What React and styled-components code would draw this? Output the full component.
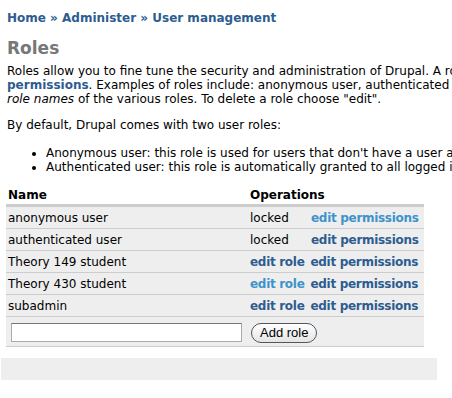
import React from 'react';
import styled, { createGlobalStyle } from 'styled-components';

const GlobalStyle = createGlobalStyle`
  body {
    margin: 0;
    background: #fff;
    font-family: 'DejaVu Sans', Verdana, sans-serif;
    font-size: 12px;
    color: #000;
  }
`;

const Page = styled.div`
  width: 452px;
  overflow: hidden;
  padding-top: 10px;
`;

const Content = styled.div`
  padding: 0 7px;
  white-space: nowrap;
`;

const Breadcrumb = styled.div`
  font-weight: bold;
  font-size: 12px;
  line-height: 16px;
  color: #2d5d90;
`;

const Link = styled.a`
  color: ${props => (props.light ? '#3d93cc' : '#2d5d90')};
  font-weight: bold;
  text-decoration: none;
`;

const OpLink = styled(Link)`
  letter-spacing: -0.3px;
`;

const Heading = styled.h1`
  margin: 12px 0 6px;
  font-size: 17px;
  line-height: 20px;
  color: #777;
`;

const Para = styled.p`
  margin: 0 0 ${props => (props.last ? '14px' : '12px')};
  line-height: 14px;
`;

const List = styled.ul`
  margin: 0 0 11px;
  padding-left: 39px;
  line-height: 14px;
  list-style: disc;
`;

const Table = styled.table`
  border-collapse: collapse;
  table-layout: fixed;
  width: 418px;
  margin-left: 6px;
  margin-top: 14px;
`;

const HeadCell = styled.th`
  width: ${props => props.w}px;
  text-align: left;
  font-weight: bold;
  padding: 0 ${props => (props.ops ? '3px' : '2px')} 2px;
  height: 13px;
  border-bottom: 3px solid #ccc;
`;

const Row = styled.tr`
  background: #eee;
  border-bottom: 1px solid #ccc;
`;

const Cell = styled.td`
  padding: 0 ${props => (props.ops ? '3px' : '2px')};
  height: ${props => (props.tall ? '29px' : '21px')};
  white-space: nowrap;
  overflow: hidden;
`;

const Ops = styled.span`
  display: inline-flex;
  gap: 6px;
`;

const Locked = styled.span`
  width: 55px;
`;

const Field = styled.input`
  width: 225px;
  height: 15px;
  margin: 2px 0 0 3px;
  border: 1px solid #aaa;
  border-top-color: #777;
  padding: 1px 2px;
  font-family: inherit;
  display: block;
`;

const Button = styled.button`
  font-family: 'Liberation Sans', Arial, sans-serif;
  font-size: 13px;
  height: 20px;
  padding: 0 8px;
  margin: 2px 0 0 1px;
  border: 1px solid #555;
  border-radius: 10px;
  background: linear-gradient(#fff, #e4e4e4);
  color: #000;
  display: block;
`;

const Footer = styled.div`
  margin: 11px 15px 0 1px;
  height: 22px;
  background: #eee;
`;

const roles = [
  { name: 'anonymous user', locked: true, permLight: true },
  { name: 'authenticated user', locked: true },
  { name: 'Theory 149 student' },
  { name: 'Theory 430 student', roleLight: true },
  { name: 'subadmin' }
];

const App = () => (
  <Page>
    <GlobalStyle />
    <Content>
      <Breadcrumb>
        <Link href="#">Home</Link> » <Link href="#">Administer</Link> » <Link href="#">User management</Link>
      </Breadcrumb>
      <Heading>Roles</Heading>
      <Para>
        Roles allow you to fine tune the security and administration of Drupal. A role defines a group of users that have certain privileges as defined in <Link href="#">user
        <br />permissions</Link>. Examples of roles include: anonymous user, authenticated user, moderator, administrator and so on. In this area you will define the
        <br /><i>role names</i> of the various roles. To delete a role choose "edit".
      </Para>
      <Para last>By default, Drupal comes with two user roles:</Para>
      <List>
        <li>Anonymous user: this role is used for users that don't have a user account or that are not authenticated.</li>
        <li>Authenticated user: this role is automatically granted to all logged in users.</li>
      </List>
    </Content>
    <Table>
      <thead>
        <tr>
          <HeadCell w={237}>Name</HeadCell>
          <HeadCell ops w={171}>Operations</HeadCell>
        </tr>
      </thead>
      <tbody>
        {roles.map(r => (
          <Row key={r.name}>
            <Cell>{r.name}</Cell>
            <Cell ops>
              <Ops>
                {r.locked ? <Locked>locked</Locked> : <OpLink href="#" light={r.roleLight ? 1 : 0}>edit role</OpLink>}
                <OpLink href="#" light={r.permLight ? 1 : 0}>edit permissions</OpLink>
              </Ops>
            </Cell>
          </Row>
        ))}
        <Row>
          <Cell tall><Field type="text" /></Cell>
          <Cell tall ops><Button>Add role</Button></Cell>
        </Row>
      </tbody>
    </Table>
    <Footer />
  </Page>
);

export default App;
